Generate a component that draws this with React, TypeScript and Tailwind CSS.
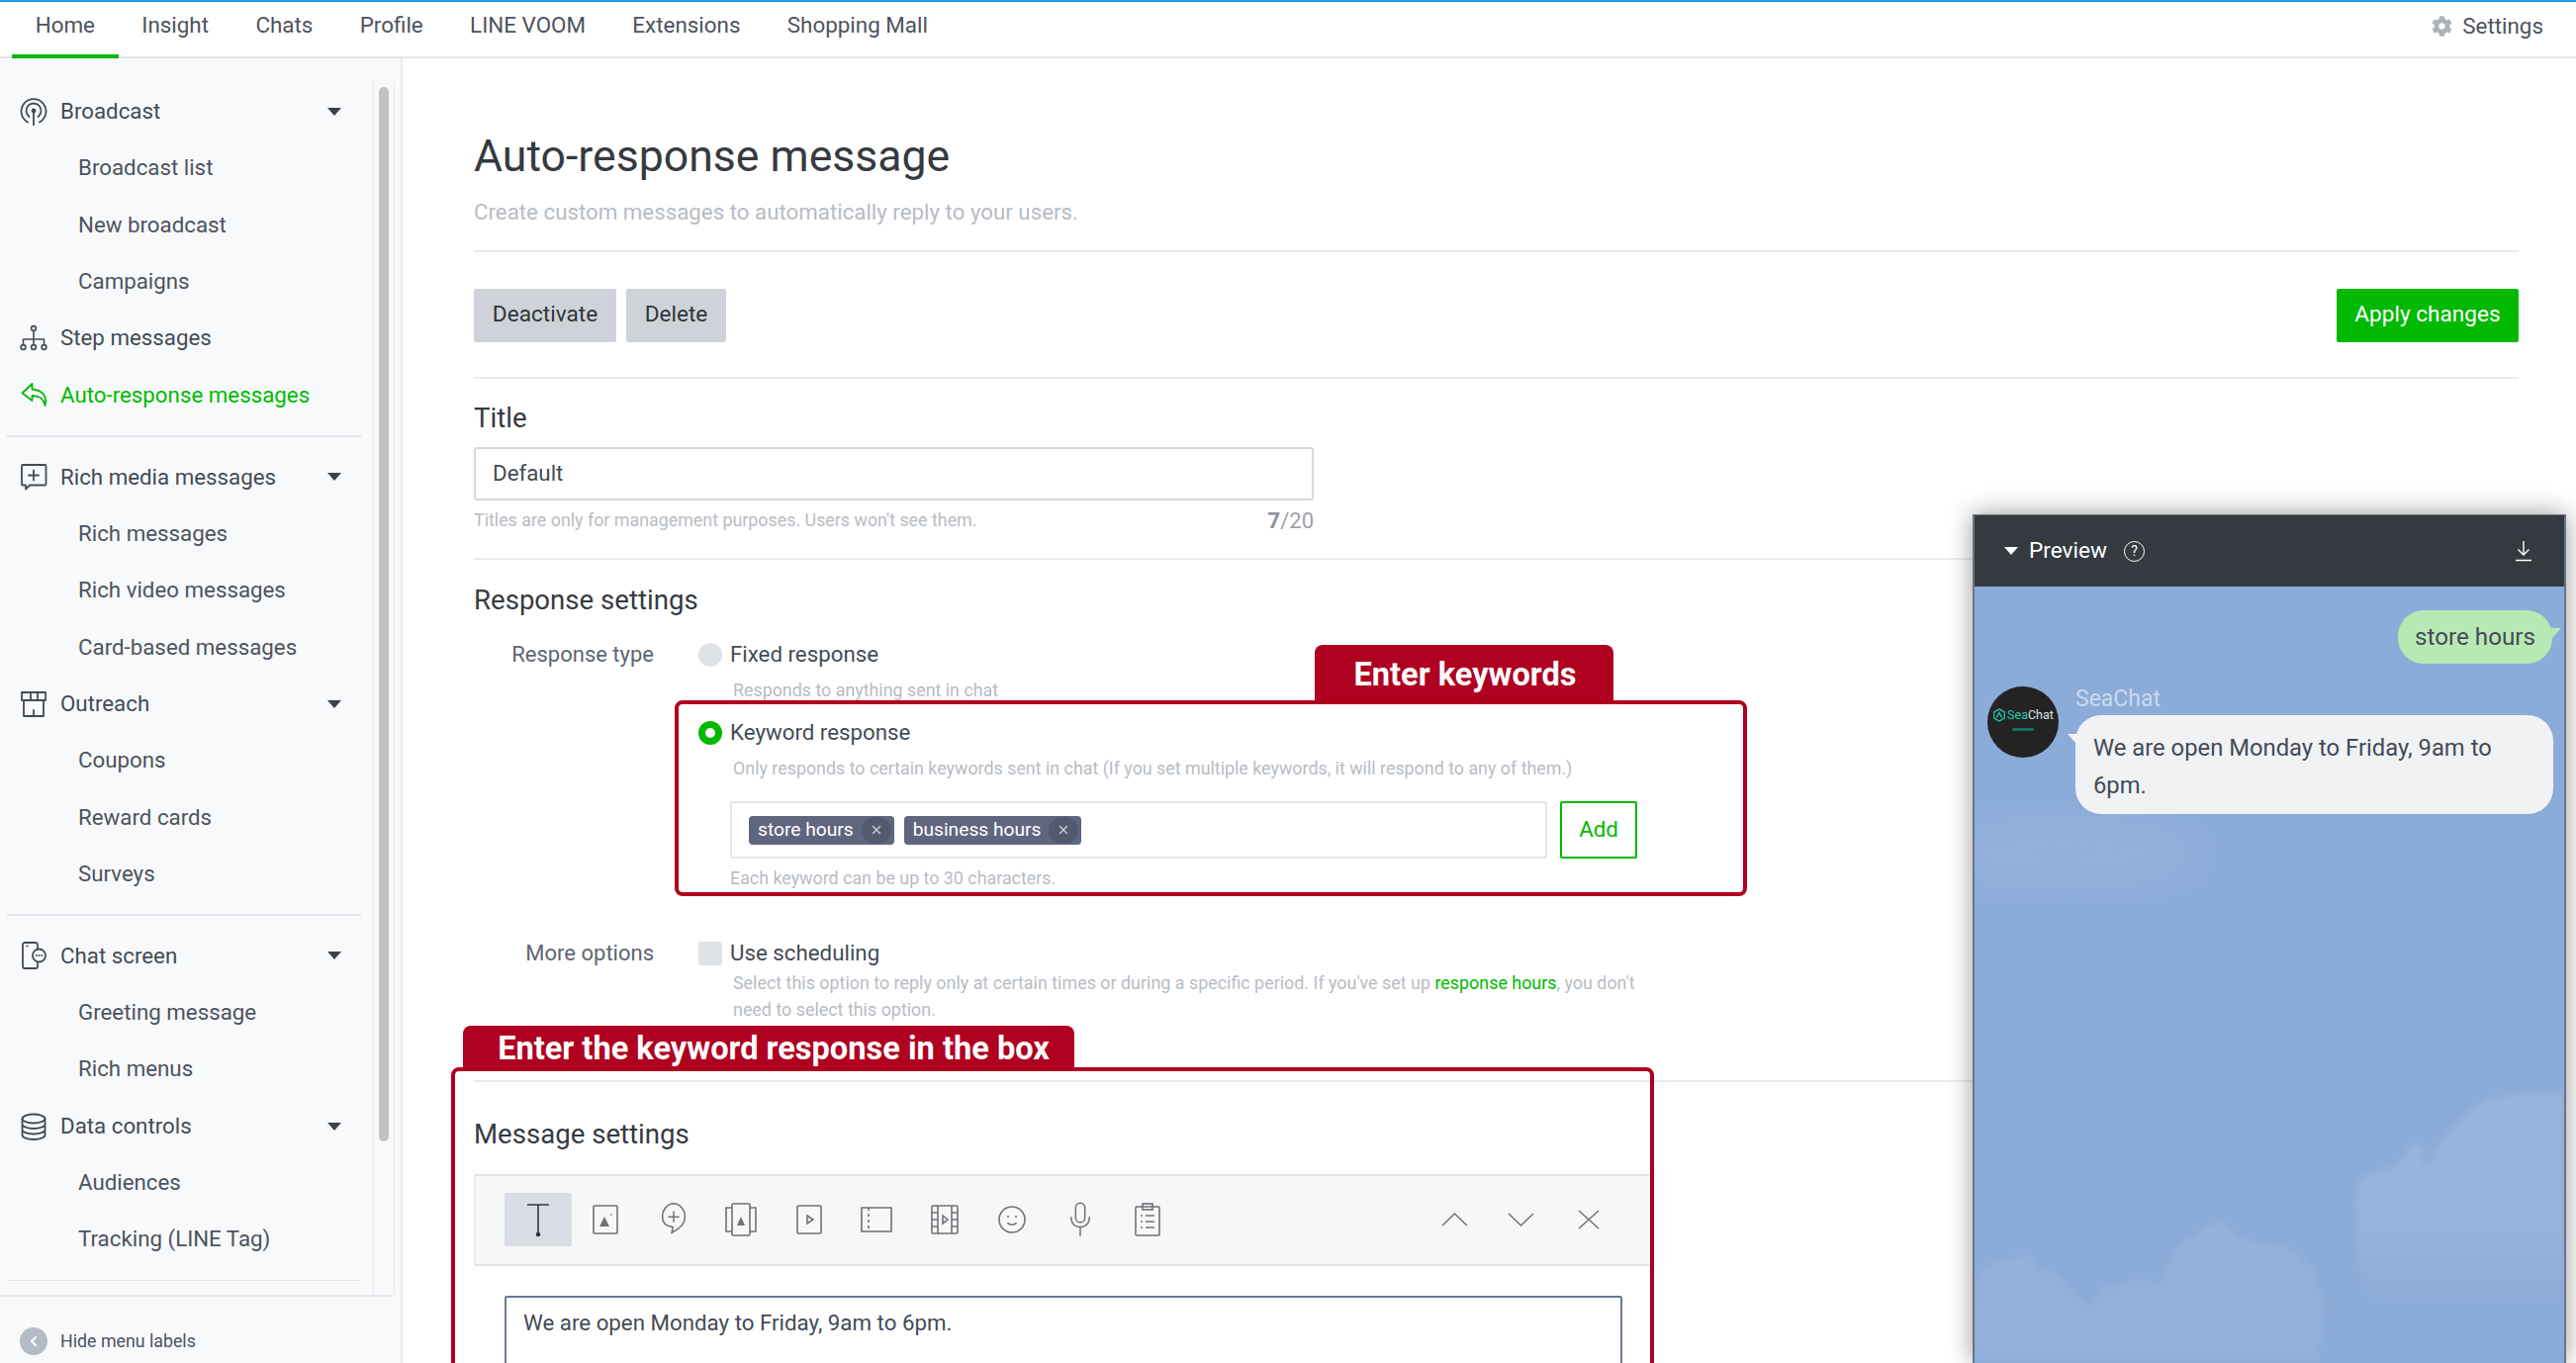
import React from 'react';
import { X, ChevronLeft } from 'lucide-react';
import { FaCog } from 'react-icons/fa';

const tabs = ['Home', 'Insight', 'Chats', 'Profile', 'LINE VOOM', 'Extensions', 'Shopping Mall'];

const Ico: React.FC<{ children: React.ReactNode; className?: string }> = ({ children, className }) => (
  <svg viewBox="0 0 28 28" fill="none" stroke="currentColor" strokeWidth="1.6" strokeLinecap="round" strokeLinejoin="round" className={className ?? 'w-7 h-7'}>
    {children}
  </svg>
);

const BroadcastIcon = () => (
  <Ico>
    <path d="M8 24.500a12.500 12.500 0 1 1 12 0" strokeWidth="1.8" />
    <path d="M9.500 19a7.500 7.500 0 1 1 9 0" strokeWidth="1.8" />
    <circle cx="14" cy="13" r="2.400" fill="currentColor" stroke="none" />
    <path d="M14 13v14.500" strokeWidth="1.8" />
  </Ico>
);
const StepIcon = () => (
  <Ico>
    <circle cx="14" cy="4" r="2.400" />
    <circle cx="3.500" cy="23" r="2.400" />
    <circle cx="14" cy="23" r="2.400" />
    <circle cx="24.500" cy="23" r="2.400" />
    <path d="M14 6.500v14M3.500 20.500V15h21v5.500" />
  </Ico>
);
const ReplyIcon = () => (
  <Ico className="w-[30px] h-[28px]">
    <path d="M11.500 3 1.500 12.500 11.500 20v-5c6 0 11 1.500 13 10 2-9-1-15-13-16.500V3Z" strokeWidth="1.8" />
  </Ico>
);
const RichIcon = () => (
  <Ico>
    <path d="M3 2h22.500a1 1 0 0 1 1 1v18.500a1 1 0 0 1-1 1H10l-4 4v-4H3a1 1 0 0 1-1-1V3a1 1 0 0 1 1-1Z" strokeWidth="1.8" />
    <path d="M14 7.500v10M9 12.500h10" strokeWidth="1.8" />
  </Ico>
);
const StoreIcon = () => (
  <Ico>
    <path d="M2 2h24v8H2zM11 2v8M18 2v8M4 10v16h20V10M14 26v-6" strokeWidth="1.8" />
  </Ico>
);
const ChatScreenIcon = () => (
  <Ico>
    <path d="M18 7V3a2 2 0 0 0-2-2H5a2 2 0 0 0-2 2v22a2 2 0 0 0 2 2h11a2 2 0 0 0 2-2v-3" strokeWidth="1.8" />
    <path d="M7 4.500h1" strokeWidth="1.6" />
    <circle cx="19.500" cy="14" r="6.500" strokeWidth="1.8" />
    <path d="M16.800 14h.1M19.500 14h.1M22.200 14h.1" strokeWidth="1.8" />
  </Ico>
);
const DatabaseIcon = () => (
  <Ico>
    <ellipse cx="14" cy="6" rx="11.500" ry="4.500" strokeWidth="1.8" />
    <path d="M2.500 6v16.500c0 2.500 5 4.500 11.500 4.500s11.500-2 11.500-4.500V6M2.500 11.500c0 2.500 5 4.500 11.500 4.500s11.500-2 11.500-4.500M2.500 17c0 2.500 5 4.500 11.500 4.500s11.500-2 11.500-4.500" strokeWidth="1.8" />
  </Ico>
);

const Caret = () => (
  <span className="ml-auto mr-[32px] w-0 h-0 border-l-[7px] border-r-[7px] border-t-[8px] border-l-transparent border-r-transparent border-t-[#3b4149]" />
);

const Head: React.FC<{ icon: React.ReactNode; label: string; caret?: boolean; active?: boolean }> = ({ icon, label, caret, active }) => (
  <div className={`flex items-center h-[57.35px] ${active ? 'text-[#00b900]' : 'text-[#444b55]'}`}>
    <span className="w-[61px] pl-[20px] flex-none flex items-center">{icon}</span>
    <span>{label}</span>
    {caret && <Caret />}
  </div>
);

const Sub: React.FC<{ label: string }> = ({ label }) => (
  <div className="flex items-center h-[57.35px] pl-[79px] text-[#4d535d]">{label}</div>
);

const Divider = () => <div className="my-[12px] ml-[7px] mr-[12px] h-[1.5px] bg-[#e4e6ea]" />;

const Sidebar = () => (
  <aside className="w-[407px] flex-none flex flex-col bg-[#f8f9fb] border-r-2 border-[#e9ebee] text-[22.3px]">
    <div className="flex-1 flex min-h-0">
      <nav className="w-[377px] flex-none pt-[25px] overflow-hidden">
        <Head icon={<BroadcastIcon />} label="Broadcast" caret />
        <Sub label="Broadcast list" />
        <Sub label="New broadcast" />
        <Sub label="Campaigns" />
        <Head icon={<StepIcon />} label="Step messages" />
        <Head icon={<ReplyIcon />} label="Auto-response messages" active />
        <Divider />
        <Head icon={<RichIcon />} label="Rich media messages" caret />
        <Sub label="Rich messages" />
        <Sub label="Rich video messages" />
        <Sub label="Card-based messages" />
        <Head icon={<StoreIcon />} label="Outreach" caret />
        <Sub label="Coupons" />
        <Sub label="Reward cards" />
        <Sub label="Surveys" />
        <Divider />
        <Head icon={<ChatScreenIcon />} label="Chat screen" caret />
        <Sub label="Greeting message" />
        <Sub label="Rich menus" />
        <Head icon={<DatabaseIcon />} label="Data controls" caret />
        <Sub label="Audiences" />
        <Sub label="Tracking (LINE Tag)" />
        <Divider />
      </nav>
      <div className="w-[22px] flex-none mt-[24px] border-x border-[#e9ebee] px-[5px] pt-[5px]">
        <div className="h-[1066px] rounded-full bg-[#c2c2c2]" />
      </div>
    </div>
    <div className="h-[69px] flex-none mr-[8px] border-t-2 border-[#e4e6ea] flex items-center pl-[20px] pt-[23px] text-[17.8px] text-[#4d535d]">
      <span className="w-[28px] h-[28px] mr-[13px] rounded-full bg-[#b3bcc5] flex items-center justify-center text-white">
        <ChevronLeft className="w-4 h-4" strokeWidth={3} />
      </span>
      Hide menu labels
    </div>
  </aside>
);

const Hr = ({ className }: { className: string }) => <div className={`h-[2px] bg-[#e9ebee] ${className}`} />;

const Chip: React.FC<{ label: string }> = ({ label }) => (
  <span className="h-[29px] flex items-center rounded-[4px] bg-[#5f6680] text-white text-[19.2px] pl-[9px] pr-[3px]">
    {label}
    <span className="ml-[8px] w-[30px] h-[27px] rounded-full bg-[#535a70] flex items-center justify-center text-[#c4c8d0]">
      <X className="w-[14px] h-[14px]" strokeWidth={2.5} />
    </span>
  </span>
);

const toolIcons = [
  <svg key="img" viewBox="0 0 28 34" className="w-[28px] h-[34px]" fill="none" stroke="#6d7278" strokeWidth="1.6">
    <rect x="2" y="3" width="24" height="28" rx="1" />
    <path d="M8 24l5-10 5 10Z" fill="#6d7278" stroke="none" />
    <path d="M19 12h1.500" />
  </svg>,
  <svg key="rich" viewBox="0 0 30 40" className="w-[30px] h-[38px]" fill="none" stroke="#6d7278" strokeWidth="1.6">
    <path d="M15 3a12.500 14 0 0 1 12 14c0 8-6 13-14 17l1-6C7 27 3 23 3 17A12.500 14 0 0 1 15 3Z" />
    <path d="M15 11v12M9 17h12" />
  </svg>,
  <svg key="card" viewBox="0 0 34 36" className="w-[34px] h-[36px]" fill="none" stroke="#6d7278" strokeWidth="1.6">
    <rect x="8" y="2" width="18" height="32" rx="1" />
    <path d="M8 6H2v24h6M26 6h6v24h-6" />
    <path d="M13 24l4-9 4 9Z" fill="#6d7278" stroke="none" />
  </svg>,
  <svg key="video" viewBox="0 0 28 34" className="w-[28px] h-[34px]" fill="none" stroke="#6d7278" strokeWidth="1.6">
    <rect x="2" y="3" width="24" height="28" rx="1" />
    <path d="M12 13l6 4-6 4Z" />
  </svg>,
  <svg key="coupon" viewBox="0 0 34 30" className="w-[34px] h-[30px]" fill="none" stroke="#6d7278" strokeWidth="1.6">
    <path d="M2 3h30v24H2z" />
    <path d="M9 3v24" strokeDasharray="3 3" />
  </svg>,
  <svg key="film" viewBox="0 0 30 34" className="w-[30px] h-[34px]" fill="none" stroke="#6d7278" strokeWidth="1.6">
    <rect x="2" y="3" width="26" height="28" rx="1" />
    <path d="M8 3v28M22 3v28M2 10h6M2 17h6M2 24h6M22 10h6M22 17h6M22 24h6" />
    <path d="M13 13l5 4-5 4Z" />
  </svg>,
  <svg key="smile" viewBox="0 0 30 34" className="w-[30px] h-[36px]" fill="none" stroke="#6d7278" strokeWidth="1.6">
    <circle cx="15" cy="17" r="13" />
    <path d="M10.500 20c1.500 3 7.500 3 9 0M11 13v2M19 13v2" />
  </svg>,
  <svg key="mic" viewBox="0 0 30 40" className="w-[28px] h-[38px]" fill="none" stroke="#6d7278" strokeWidth="1.6">
    <rect x="10" y="2" width="10" height="21" rx="5" />
    <path d="M5 17c0 7 4 11 10 11s10-4 10-11M15 28v10" />
  </svg>,
  <svg key="clip" viewBox="0 0 28 36" className="w-[28px] h-[36px]" fill="none" stroke="#6d7278" strokeWidth="1.6">
    <rect x="2" y="5" width="24" height="29" rx="1" />
    <rect x="9" y="2" width="10" height="6" />
    <path d="M7 14h2M12 14h9M7 20h2M12 20h9M7 26h2M12 26h9" />
  </svg>,
];

const Annotation: React.FC<{ label: string; className: string; tabClassName: string }> = ({ label, className, tabClassName }) => (
  <div className={`absolute border-[4px] border-[#af0020] rounded-[8px] pointer-events-none ${className}`}>
    <div className={`absolute bg-[#af0020] rounded-t-[8px] text-white font-bold text-[32.6px] flex items-center justify-center whitespace-nowrap ${tabClassName}`}>
      {label}
    </div>
  </div>
);

const Clouds = () => (
  <svg viewBox="0 0 600 786" className="absolute left-0 top-0 w-full h-[786px]" preserveAspectRatio="none">
    <defs>
      <linearGradient id="cloudRight" x1="0" y1="0" x2="0" y2="1">
        <stop offset="0" stopColor="#99b5dd" stopOpacity="0.9" />
        <stop offset="0.6" stopColor="#99b5dd" stopOpacity="0.8" />
        <stop offset="0.95" stopColor="#99b5dd" stopOpacity="0" />
      </linearGradient>
      <linearGradient id="cloudLeft" x1="0" y1="0" x2="0" y2="1">
        <stop offset="0" stopColor="#99b5dd" stopOpacity="0.8" />
        <stop offset="0.45" stopColor="#97b3dc" stopOpacity="0.6" />
        <stop offset="0.85" stopColor="#97b3dc" stopOpacity="0.8" />
        <stop offset="1" stopColor="#97b3dc" stopOpacity="0.2" />
      </linearGradient>
      <filter id="soft"><feGaussianBlur stdDeviation="3" /></filter>
      <filter id="softer"><feGaussianBlur stdDeviation="18" /></filter>
    </defs>
    <ellipse cx="90" cy="270" rx="140" ry="40" fill="#95b2de" opacity="0.7" filter="url(#softer)" />
    <path
      filter="url(#soft)"
      fill="url(#cloudRight)"
      d="M387 618 L392 600 L399 595 L430 585 L446 564 L456 566 L458 591 L482 550 L500 534 L518 519 L560 512 L600 512 L600 740 L480 740 L400 725 L390 680 Z"
    />
    <path
      filter="url(#soft)"
      fill="url(#cloudLeft)"
      d="M0 698 L25 680 L45 678 L54 675 L64 690 L85 695 L116 728 L130 708 L170 700 L188 704 L205 670 L240 645 L255 643 L270 660 L295 665 L323 670 L345 690 L355 720 L350 786 L0 786 Z"
    />
  </svg>
);

const Preview = () => (
  <div className="absolute left-[1994px] top-[520px] bottom-0 w-[600px] flex flex-col border-x-2 border-t border-[#6c7486] shadow-[0_0_24px_rgba(0,0,0,0.4)]">
    <div className="h-[72px] flex-none bg-[#353a41] text-white flex items-center pl-[30px] pr-[32px] text-[22.6px]">
      <span className="w-0 h-0 border-l-[7px] border-r-[7px] border-t-[8px] border-l-transparent border-r-transparent border-t-white mr-[11px]" />
      Preview
      <span className="ml-[17px] w-[21px] h-[21px] rounded-full border-[1.5px] border-white flex items-center justify-center text-[14px]">?</span>
      <svg viewBox="0 0 18 22" className="ml-auto w-[18px] h-[22px]" fill="none" stroke="white" strokeWidth="1.4">
        <path d="M9 1v14M3.500 9.500 9 15l5.500-5.500M1 20.500h16" />
      </svg>
    </div>
    <div className="relative flex-1 bg-[#8babd8] overflow-hidden">
      <Clouds />
      <div className="relative pt-[24px]">
        <div className="flex justify-end pr-[12px]">
          <div className="relative h-[54px] px-[17px] rounded-[26px] bg-[#b8e9b5] text-[#444b55] text-[24.2px] flex items-center">
            store hours
            <svg viewBox="0 0 10 10" className="absolute right-[-9px] top-[18px] w-[10px] h-[10px]">
              <path d="M0 0h10L1 10Z" fill="#b8e9b5" />
            </svg>
          </div>
        </div>
        <div className="flex mt-[23px] pl-[13px] pr-[11px]">
          <div className="w-[72px] h-[72px] flex-none rounded-full bg-[#232323] flex flex-col items-center justify-center">
            <div className="flex items-center gap-[1px] -mt-[5px]">
              <svg viewBox="0 0 16 16" className="w-[14px] h-[14px]" fill="none" stroke="#1fcfb0" strokeWidth="1.4">
                <path d="M8 1l6 3.500v7L8 15l-6-3.500v-7ZM5 11l3-6 3 6" />
              </svg>
              <span className="text-[12.5px] leading-none">
                <span className="text-[#1fcfb0]">Sea</span>
                <span className="text-[#dfe3e6]">Chat</span>
              </span>
            </div>
            <span className="mt-[6px] w-[22px] h-[3px] rounded-full bg-[#1b6f62]" />
          </div>
          <div className="ml-[17px] flex-1 -mt-[1px]">
            <div className="text-[#cbd8ee] text-[23px] leading-[28px]">SeaChat</div>
            <div className="relative mt-[2px] rounded-[26px] bg-[#f1f2f4] text-[#444b55] text-[23.8px] leading-[38px] pl-[18px] pr-[20px] pt-[14px] pb-[10px]">
              We are open Monday to Friday, 9am to 6pm.
              <svg viewBox="0 0 9 10" className="absolute left-[-8px] top-[19px] w-[9px] h-[10px]">
                <path d="M9 0H0l9 10Z" fill="#f1f2f4" />
              </svg>
            </div>
          </div>
        </div>
      </div>
    </div>
  </div>
);

const Main = () => (
  <main className="flex-1 min-w-0 overflow-hidden pl-[72px] pr-[58px] text-[#444b55] text-[22.3px]">
    <h1 className="mt-[72px] h-[54px] flex items-center text-[44.6px] text-[#353a41]">Auto-response message</h1>
    <p className="mt-[15px] h-[28px] leading-[28px] text-[22.3px] text-[#b7bcc4]">Create custom messages to automatically reply to your users.</p>
    <Hr className="mt-[25px]" />
    <div className="mt-[37px] flex gap-[10px] items-center text-[22.6px]">
      <button className="h-[54px] w-[144px] pb-[2px] rounded-[2px] bg-[#cfd3d9] text-[#2f343a]">Deactivate</button>
      <button className="h-[54px] w-[101px] pb-[2px] rounded-[2px] bg-[#cfd3d9] text-[#2f343a]">Delete</button>
      <button className="ml-auto h-[54px] w-[184px] pb-[2px] rounded-[2px] bg-[#00b900] text-white">Apply changes</button>
    </div>
    <Hr className="mt-[35px]" />
    <h2 className="mt-[24px] h-[32px] leading-[32px] text-[27.6px] text-[#353a41]">Title</h2>
    <div className="w-[849px]">
      <div className="mt-[13px] h-[54px] flex items-center px-[17px] border-2 border-[#d5d9de] rounded-[3px]">Default</div>
      <div className="mt-[8px] flex justify-between items-center h-[24px] text-[17.85px] text-[#b7bcc4]">
        <span>Titles are only for management purposes. Users won't see them.</span>
        <span className="text-[22px] text-[#9ca1a9]"><b className="text-[#8b9099]">7</b>/20</span>
      </div>
    </div>
    <Hr className="mt-[26px]" />
    <h2 className="mt-[25px] h-[32px] leading-[32px] text-[27.6px] text-[#353a41]">Response settings</h2>

    <div className="mt-[26px] flex">
      <div className="w-[182px] flex-none text-right text-[22px] text-[#5f6570] h-[26px] leading-[26px]">Response type</div>
      <div className="ml-[45px] w-[960px]">
        <label className="flex items-center h-[26px]">
          <span className="w-[24px] h-[24px] rounded-full bg-[#dfe2e6] mr-[8px]" />
          Fixed response
        </label>
        <p className="mt-[12px] ml-[35px] h-[22px] leading-[22px] text-[17.85px] text-[#b7bcc4]">Responds to anything sent in chat</p>
        <label className="mt-[19px] flex items-center h-[26px]">
          <span className="w-[24px] h-[24px] rounded-full border-[7px] border-[#00b900] bg-white mr-[8px]" />
          Keyword response
        </label>
        <p className="mt-[12px] ml-[35px] h-[22px] leading-[22px] text-[17.85px] text-[#b7bcc4] whitespace-nowrap">Only responds to certain keywords sent in chat (If you set multiple keywords, it will respond to any of them.)</p>
        <div className="mt-[22px] ml-[32px] flex gap-[13px]">
          <div className="w-[826px] h-[58px] border-2 border-[#e4e6ea] rounded-[2px] flex items-center gap-[10px] pl-[17px]">
            <Chip label="store hours" />
            <Chip label="business hours" />
          </div>
          <button className="w-[78px] h-[58px] border-2 border-[#00b900] rounded-[2px] text-[#00b900] bg-white">Add</button>
        </div>
        <p className="mt-[9px] ml-[32px] h-[22px] leading-[22px] text-[17.85px] text-[#b7bcc4]">Each keyword can be up to 30 characters.</p>
      </div>
    </div>

    <div className="mt-[52px] flex">
      <div className="w-[182px] flex-none text-right text-[22px] text-[#5f6570] h-[26px] leading-[26px]">More options</div>
      <div className="ml-[45px] w-[960px]">
        <label className="flex items-center h-[26px]">
          <span className="w-[24px] h-[24px] rounded-[3px] bg-[#dfe2e6] mr-[8px]" />
          Use scheduling
        </label>
        <p className="mt-[3px] ml-[35px] leading-[27px] text-[17.9px] text-[#b7bcc4] w-[940px]">
          Select this option to reply only at certain times or during a specific period. If you've set up <span className="text-[#00b900]">response hours</span>, you don't need to select this option.
        </p>
      </div>
    </div>

    <Hr className="mt-[58px]" />
    <h2 className="mt-[37px] h-[32px] leading-[32px] text-[27.6px] text-[#353a41]">Message settings</h2>
    <div className="mt-[24px] w-[1189px] h-[93px] pb-[2px] border-t-2 border-b-2 border-t-[#e0e3e7] border-b-[#e4e4e4] border-l-2 border-l-[#e9ebee] bg-[#f7f7f7] flex items-center pl-[29px] pr-[51px]">
      <span className="w-[68px] h-[54px] rounded-[2px] bg-[#d9dee4] flex items-center justify-center">
        <svg viewBox="0 0 30 36" className="w-[30px] h-[36px]" fill="none" stroke="#30353b" strokeWidth="1.6">
          <path d="M4 3h22M15 3v30" />
          <circle cx="15" cy="33" r="1.500" fill="#30353b" />
        </svg>
      </span>
      {toolIcons.map(icon => (
        <span key={icon.key} className="w-[68.5px] h-[54px] flex items-center justify-center">{icon}</span>
      ))}
      <span className="ml-auto flex items-center">
        <svg viewBox="0 0 27 14" className="w-[27px] h-[14px]" fill="none" stroke="#6d7278" strokeWidth="1.5">
          <path d="M1 13 13.500 1 26 13" />
        </svg>
        <svg viewBox="0 0 27 14" className="ml-[40px] w-[27px] h-[14px]" fill="none" stroke="#6d7278" strokeWidth="1.5">
          <path d="M1 1l12.500 12L26 1" />
        </svg>
        <svg viewBox="0 0 22 20" className="ml-[44px] w-[22px] h-[20px]" fill="none" stroke="#6d7278" strokeWidth="1.5">
          <path d="M1 1l20 18M21 1 1 19" />
        </svg>
      </span>
    </div>
    <div className="mt-[30px] ml-[31px] w-[1130px] h-[120px] border-2 border-[#6b7a99] rounded-[2px] px-[17px] pt-[9px]">
      We are open Monday to Friday, 9am to 6pm.
    </div>
  </main>
);

export default function App() {
  return (
    <div className="relative w-[2604px] h-[1378px] overflow-hidden bg-white font-['Roboto',sans-serif]">
      <div className="h-[2px] bg-[#1e9df2]" />
      <header className="h-[57px] flex items-stretch border-b-2 border-[#e4e6ea] pl-[12px] pr-[33px] text-[22.4px] text-[#4d535d]">
        {tabs.map((t, i) => (
          <div key={t} className={`px-[23.7px] pb-[6px] flex items-center border-b-[4px] -mb-[2px] ${i === 0 ? 'border-[#00b900]' : 'border-transparent'}`}>{t}</div>
        ))}
        <div className="ml-auto pb-[6px] flex items-center gap-[10px]">
          <FaCog className="w-[21px] h-[21px] text-[#aab2ba]" />
          Settings
        </div>
      </header>
      <div className="flex h-[1319px]">
        <Sidebar />
        <Main />
      </div>
      <Annotation label="Enter keywords" className="left-[682px] top-[708px] w-[1084px] h-[198px]" tabClassName="left-[643px] top-[-60px] w-[302px] h-[60px] pl-[2px]" />
      <Annotation label="Enter the keyword response in the box" className="left-[456px] top-[1079px] w-[1216px] h-[340px]" tabClassName="left-[8px] top-[-46px] w-[618px] h-[46px] pl-[10px]" />
      <Preview />
    </div>
  );
}
